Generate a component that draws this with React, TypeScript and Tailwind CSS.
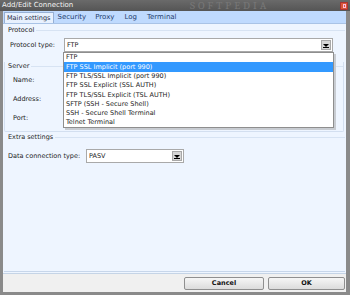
import React from "react";

const items = [
  "FTP",
  "FTP SSL Implicit (port 990)",
  "FTP TLS/SSL Implicit (port 990)",
  "FTP SSL Explicit (SSL AUTH)",
  "FTP TLS/SSL Explicit (TSL AUTH)",
  "SFTP (SSH - Secure Shell)",
  "SSH - Secure Shell Terminal",
  "Telnet Terminal",
];

function Arrow() {
  return (
    <div className="w-[10px] h-[10px] bg-[#d6d6d6] border border-[#a8a8a8] flex items-center justify-center">
      <svg width="6" height="5" viewBox="0 0 6 5">
        <path d="M0 1 L6 1 L3 4 Z" fill="#000" />
        <rect x="0" y="4" width="6" height="1" fill="#000" />
      </svg>
    </div>
  );
}

export default function App() {
  const font = { fontFamily: '"DejaVu Sans", sans-serif' };
  return (
    <div
      className="w-[350px] h-[295px] bg-[#8a8a8a] flex flex-col overflow-hidden relative text-[6.5px] leading-none text-[#1b1b1b]"
      style={font}
    >
      {/* title bar */}
      <div className="h-[11px] bg-gradient-to-b from-[#6a6a6a] to-[#555] flex items-center pl-[2px] pr-[2px] relative overflow-hidden">
        <span className="text-[#f2f2f2] text-[7px]">Add/Edit Connection</span>
        <span className="absolute left-[190px] top-0 text-[11px] leading-[11px] tracking-[3px] text-[#777] font-serif">
          SOFTPEDIA
        </span>
        <div className="ml-auto w-[8px] h-[8px] bg-[#d9573a] border border-[#a33] flex items-center justify-center">
          <div className="w-[3px] h-[4px] border border-[#fbd]" />
        </div>
      </div>
      <div className="flex-1 flex flex-col pl-[3px] pr-[4px] pb-[3px]">
        {/* tab strip */}
        <div className="h-[13px] bg-[#bfdafe] flex items-end border-b border-[#a9c3e6] pl-[1px]">
          <div className="h-[11px] px-[2px] bg-[#e8f1fe] border border-b-0 border-[#97b0d4] flex items-center text-[#1d2b45]">
            Main settings
          </div>
          <div className="h-[11px] ml-[4px] flex items-center text-[#24406e] gap-[9px] text-[7px]">
            <span>Security</span>
            <span>Proxy</span>
            <span className="ml-[1px]">Log</span>
            <span className="ml-[1px]">Terminal</span>
          </div>
        </div>
        {/* panel */}
        <div className="flex-1 bg-[#eef5ff] flex flex-col pl-[1px] pr-[1px] relative">
          {/* Protocol group */}
          <div className="flex items-center h-[8px] mt-[2px] pl-[4px]">
            <span>Protocol</span>
            <div className="flex-1 h-px bg-[#d7e3f3] ml-[2px]" />
          </div>
          <div className="flex items-center h-[14px] mt-[4px] pl-[6px]">
            <span className="w-[54px]">Protocol type:</span>
            <div className="w-[269px] h-[14px] bg-white border border-[#a9a9a9] flex items-center pl-[2px] pr-[1px]">
              <span>FTP</span>
              <div className="ml-auto">
                <Arrow />
              </div>
            </div>
          </div>
          {/* Server group */}
          <div className="flex-none mt-[10px] border-l border-b border-r border-[#d3dff0] rounded-b-[2px] mr-[1px] flex flex-col pb-[9px]">
            <div className="flex items-center h-[8px] pl-[3px]">
              <span>Server</span>
              <div className="flex-1 h-px bg-[#d7e3f3] ml-[2px]" />
            </div>
            <div className="pl-[8px] mt-[6px] h-[8px] flex items-center">Name:</div>
            <div className="pl-[8px] mt-[11px] h-[8px] flex items-center">Address:</div>
            <div className="pl-[8px] mt-[11px] h-[8px] flex items-center">Port:</div>
          </div>
          {/* Extra settings */}
          <div className="flex items-center h-[8px] mt-[1px] pl-[4px]">
            <span>Extra settings</span>
            <div className="flex-1 h-px bg-[#d7e3f3] ml-[2px]" />
          </div>
          <div className="flex items-center h-[14px] mt-[8px] pl-[4px]">
            <span className="w-[78px]">Data connection type:</span>
            <div className="w-[98px] h-[14px] bg-white border border-[#a9a9a9] flex items-center pl-[2px] pr-[1px]">
              <span>PASV</span>
              <div className="ml-auto">
                <Arrow />
              </div>
            </div>
          </div>
          <div className="flex-1" />
          <div className="h-[2px] border-t border-[#c7d6ea]" />
          {/* dropdown list */}
          <div className="absolute left-[60px] top-[28px] w-[271px] bg-white border border-[#8e8e8e] shadow-[2px_2px_0_#c8ccd2] flex flex-col">
            {items.map((it, i) => (
              <div
                key={it}
                className={
                  "h-[9.3px] flex items-center pl-[2px] " +
                  (i === 1 ? "bg-[#3399ff] text-white" : "")
                }
              >
                {it}
              </div>
            ))}
          </div>
        </div>
        {/* bottom bar */}
        <div className="h-[19px] bg-[#f0f0f0] border-t border-[#c5d4e6] flex items-center justify-end gap-[4px] pr-[1px]">
          <button className="w-[80px] h-[13px] bg-gradient-to-b from-[#f6f6f6] to-[#dcdcdc] border border-[#8f8f8f] rounded-[2px] font-bold text-[6.5px] text-[#111]">
            Cancel
          </button>
          <button className="w-[77px] h-[13px] bg-gradient-to-b from-[#f6f6f6] to-[#dcdcdc] border border-[#8f8f8f] rounded-[2px] font-bold text-[6.5px] text-[#111]">
            OK
          </button>
        </div>
      </div>
    </div>
  );
}
